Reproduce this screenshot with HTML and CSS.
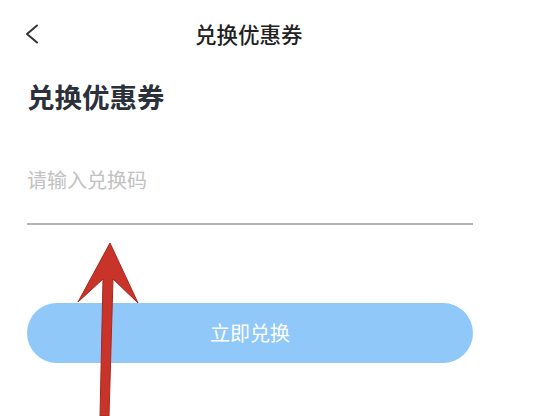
FILE: index.html
```html
<!DOCTYPE html>
<html lang="zh-CN">
<head>
<meta charset="utf-8">
<title>兑换优惠券</title>
<link rel="stylesheet" href="styles.css">
</head>
<body>
<div class="page">
  <header class="nav">
    <svg class="back" width="14" height="20" viewBox="0 0 14 20"><path d="M12 1.5 L2 10 L12 18.5" fill="none" stroke="#333" stroke-width="2" stroke-linecap="round" stroke-linejoin="round"/></svg>
    <div class="nav-title">兑换优惠券</div>
  </header>
  <main class="content">
    <h1 class="title">兑换优惠券</h1>
    <input class="field" type="text" placeholder="请输入兑换码">
    <button class="btn">立即兑换</button>
  </main>
  <svg class="arrow" width="538" height="416" viewBox="0 0 538 416">
    <polygon points="110,243 138,303 113,279 109,416 100,416 103,279 78,302" fill="#c8332a" stroke="#a9281f" stroke-width="1" stroke-linejoin="miter"/>
  </svg>
</div>
</body>
</html>
```
FILE: styles.css
```css
* { box-sizing: border-box; margin: 0; padding: 0; }
html, body { background: #fff; }
body {
  font-family: "Noto Sans CJK SC", "Noto Sans", sans-serif;
  width: 538px;
  height: 416px;
  overflow: hidden;
}
.page { position: relative; width: 538px; height: 416px; }
.nav {
  height: 68px;
  display: flex;
  align-items: center;
  padding-left: 25px;
}
.back { display: block; }
.nav-title {
  margin-left: 156px;
  font-size: 21.5px;
  line-height: 28px;
  font-weight: 500;
  color: #222;
}
.content {
  padding: 0 65px 0 27px;
  display: flex;
  flex-direction: column;
}
.title {
  margin-top: 10px;
  font-size: 27.5px;
  line-height: 36px;
  font-weight: 700;
  color: #2b303a;
}
.field {
  margin-top: 52px;
  border: none;
  border-bottom: 2px solid #b3b3b3;
  outline: none;
  background: transparent;
  font-family: inherit;
  font-size: 20px;
  line-height: 28px;
  height: 59px;
  padding: 0 0 31px 0;
  color: #333;
}
.field::placeholder { color: #c2c2c2; }
.btn {
  margin-top: 78px;
  height: 60px;
  border: none;
  border-radius: 30px;
  background: #90c8fa;
  color: #fff;
  font-family: inherit;
  font-size: 20px;
  line-height: 28px;
}
.arrow { position: absolute; left: 0; top: 0; pointer-events: none; }
```
